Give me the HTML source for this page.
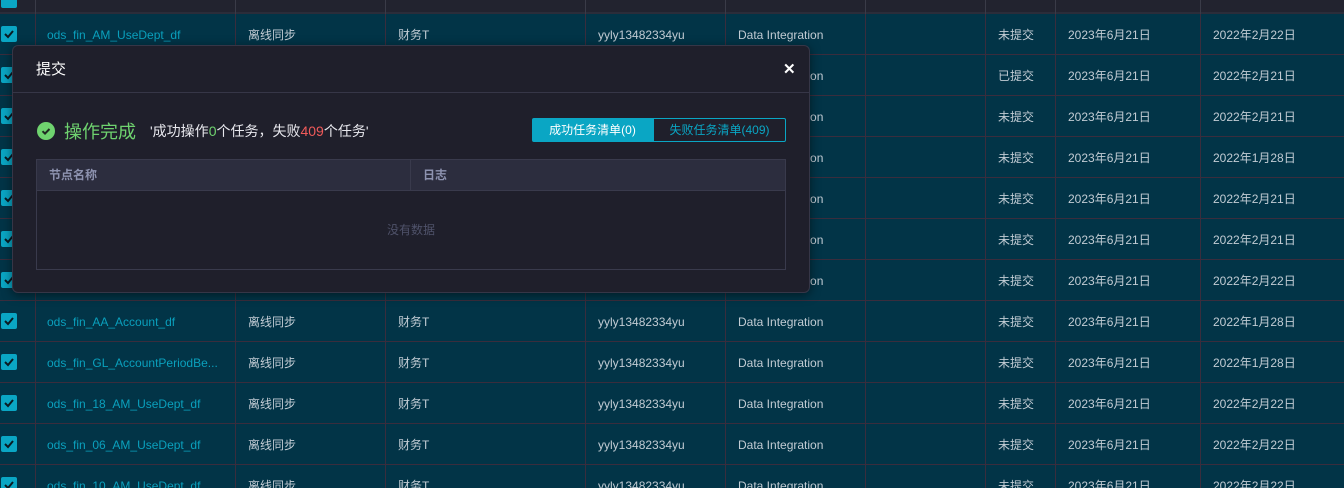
<!DOCTYPE html>
<html><head><meta charset="utf-8">
<style>
*{margin:0;padding:0;box-sizing:border-box}
html,body{width:1344px;height:488px;overflow:hidden}
body{background:#023447;font-family:"Liberation Sans","Noto Sans CJK SC",sans-serif;font-size:12px;color:#c2ccd4;position:relative}
.hdr{position:absolute;left:0;top:0;width:1344px;height:14px;background:#22232f;border-bottom:2px solid #2b2d3a}
.row{position:absolute;left:0;width:1344px;height:41px;border-bottom:1px solid #3a2d3d}
.c{position:absolute;top:0;height:41px;line-height:43px;border-left:1px solid #3a2d3d;padding-left:12px;white-space:nowrap;overflow:hidden}
.cb{position:absolute;left:1px;top:12px;width:16px;height:16px;background:#0aa6c4;border-radius:2px}
.cb svg{position:absolute;left:2px;top:2px}
.nm{color:#0aa0bd;padding-left:11px}
.modal{position:absolute;left:12px;top:45px;width:798px;height:248px;background:#1f1f2b;border:1px solid #363647;border-radius:6px;box-shadow:0 2px 10px rgba(0,0,0,.5)}
.mh{height:47px;border-bottom:1px solid #363647;color:#fff;font-size:15px;line-height:48px;padding-left:23px}
.x{position:absolute;left:770px;top:14px;color:#fff;font-size:15px;font-weight:bold}
.ok{position:absolute;left:24px;top:73px;height:24px;display:flex;align-items:center}
.ok .ic{width:18px;height:18px;border-radius:50%;background:#6fd36f;position:relative}
.ok .t{color:#6fd36f;font-size:18px;margin-left:9px}
.ok .m{color:#e8e8ee;font-size:14px;margin-left:14px}
.tabs{position:absolute;left:519px;top:72px;display:flex;height:24px;font-size:12px}
.tabs div{height:24px;line-height:22px;text-align:center;border:1px solid #0aa6c4}
.t1{width:121px;background:#0aa6c4;color:#fff;border-radius:2px 0 0 2px}
.t2{width:133px;color:#0aa6c4;border-radius:0 2px 2px 0}
.tb{position:absolute;left:23px;top:113px;width:750px;height:111px;border:1px solid #393a4c}
.th{height:31px;background:#2c2d3e;border-bottom:1px solid #393a4c;color:#8e93b0;font-weight:bold;line-height:30px;position:relative}
.th span{position:absolute;top:0}
.empty{text-align:center;color:#4f526a;line-height:78px}
</style></head><body>
<div class="hdr"></div>
<div class="cb" style="top:-8px"></div>
<div class="row" style="top:14px"><div class="cb"><svg width="12" height="12"><path d="M2 6l3 3 5-6" stroke="#0a1a22" stroke-width="2" fill="none"/></svg></div><div class="c nm" style="left:35px;width:200px">ods_fin_AM_UseDept_df</div><div class="c" style="left:235px;width:150px">离线同步</div><div class="c" style="left:385px;width:200px">财务T</div><div class="c" style="left:585px;width:140px">yyly13482334yu</div><div class="c" style="left:725px;width:140px">Data Integration</div><div class="c" style="left:865px;width:120px"></div><div class="c" style="left:985px;width:70px">未提交</div><div class="c" style="left:1055px;width:145px">2023年6月21日</div><div class="c" style="left:1200px;width:144px">2022年2月22日</div></div>
<div class="row" style="top:55px"><div class="cb"><svg width="12" height="12"><path d="M2 6l3 3 5-6" stroke="#0a1a22" stroke-width="2" fill="none"/></svg></div><div class="c" style="left:35px;width:200px"></div><div class="c" style="left:725px;width:140px">Data Integration</div><div class="c" style="left:865px;width:120px"></div><div class="c" style="left:985px;width:70px">已提交</div><div class="c" style="left:1055px;width:145px">2023年6月21日</div><div class="c" style="left:1200px;width:144px">2022年2月21日</div></div>
<div class="row" style="top:96px"><div class="cb"><svg width="12" height="12"><path d="M2 6l3 3 5-6" stroke="#0a1a22" stroke-width="2" fill="none"/></svg></div><div class="c" style="left:725px;width:140px">Data Integration</div><div class="c" style="left:865px;width:120px"></div><div class="c" style="left:985px;width:70px">未提交</div><div class="c" style="left:1055px;width:145px">2023年6月21日</div><div class="c" style="left:1200px;width:144px">2022年2月21日</div></div>
<div class="row" style="top:137px"><div class="cb"><svg width="12" height="12"><path d="M2 6l3 3 5-6" stroke="#0a1a22" stroke-width="2" fill="none"/></svg></div><div class="c" style="left:725px;width:140px">Data Integration</div><div class="c" style="left:865px;width:120px"></div><div class="c" style="left:985px;width:70px">未提交</div><div class="c" style="left:1055px;width:145px">2023年6月21日</div><div class="c" style="left:1200px;width:144px">2022年1月28日</div></div>
<div class="row" style="top:178px"><div class="cb"><svg width="12" height="12"><path d="M2 6l3 3 5-6" stroke="#0a1a22" stroke-width="2" fill="none"/></svg></div><div class="c" style="left:725px;width:140px">Data Integration</div><div class="c" style="left:865px;width:120px"></div><div class="c" style="left:985px;width:70px">未提交</div><div class="c" style="left:1055px;width:145px">2023年6月21日</div><div class="c" style="left:1200px;width:144px">2022年2月21日</div></div>
<div class="row" style="top:219px"><div class="cb"><svg width="12" height="12"><path d="M2 6l3 3 5-6" stroke="#0a1a22" stroke-width="2" fill="none"/></svg></div><div class="c" style="left:725px;width:140px">Data Integration</div><div class="c" style="left:865px;width:120px"></div><div class="c" style="left:985px;width:70px">未提交</div><div class="c" style="left:1055px;width:145px">2023年6月21日</div><div class="c" style="left:1200px;width:144px">2022年2月21日</div></div>
<div class="row" style="top:260px"><div class="cb"><svg width="12" height="12"><path d="M2 6l3 3 5-6" stroke="#0a1a22" stroke-width="2" fill="none"/></svg></div><div class="c" style="left:35px;width:200px"></div><div class="c" style="left:235px;width:150px"></div><div class="c" style="left:385px;width:200px"></div><div class="c" style="left:585px;width:140px"></div><div class="c" style="left:725px;width:140px">Data Integration</div><div class="c" style="left:865px;width:120px"></div><div class="c" style="left:985px;width:70px">未提交</div><div class="c" style="left:1055px;width:145px">2023年6月21日</div><div class="c" style="left:1200px;width:144px">2022年2月22日</div></div>
<div class="row" style="top:301px"><div class="cb"><svg width="12" height="12"><path d="M2 6l3 3 5-6" stroke="#0a1a22" stroke-width="2" fill="none"/></svg></div><div class="c nm" style="left:35px;width:200px">ods_fin_AA_Account_df</div><div class="c" style="left:235px;width:150px">离线同步</div><div class="c" style="left:385px;width:200px">财务T</div><div class="c" style="left:585px;width:140px">yyly13482334yu</div><div class="c" style="left:725px;width:140px">Data Integration</div><div class="c" style="left:865px;width:120px"></div><div class="c" style="left:985px;width:70px">未提交</div><div class="c" style="left:1055px;width:145px">2023年6月21日</div><div class="c" style="left:1200px;width:144px">2022年1月28日</div></div>
<div class="row" style="top:342px"><div class="cb"><svg width="12" height="12"><path d="M2 6l3 3 5-6" stroke="#0a1a22" stroke-width="2" fill="none"/></svg></div><div class="c nm" style="left:35px;width:200px">ods_fin_GL_AccountPeriodBe...</div><div class="c" style="left:235px;width:150px">离线同步</div><div class="c" style="left:385px;width:200px">财务T</div><div class="c" style="left:585px;width:140px">yyly13482334yu</div><div class="c" style="left:725px;width:140px">Data Integration</div><div class="c" style="left:865px;width:120px"></div><div class="c" style="left:985px;width:70px">未提交</div><div class="c" style="left:1055px;width:145px">2023年6月21日</div><div class="c" style="left:1200px;width:144px">2022年1月28日</div></div>
<div class="row" style="top:383px"><div class="cb"><svg width="12" height="12"><path d="M2 6l3 3 5-6" stroke="#0a1a22" stroke-width="2" fill="none"/></svg></div><div class="c nm" style="left:35px;width:200px">ods_fin_18_AM_UseDept_df</div><div class="c" style="left:235px;width:150px">离线同步</div><div class="c" style="left:385px;width:200px">财务T</div><div class="c" style="left:585px;width:140px">yyly13482334yu</div><div class="c" style="left:725px;width:140px">Data Integration</div><div class="c" style="left:865px;width:120px"></div><div class="c" style="left:985px;width:70px">未提交</div><div class="c" style="left:1055px;width:145px">2023年6月21日</div><div class="c" style="left:1200px;width:144px">2022年2月22日</div></div>
<div class="row" style="top:424px"><div class="cb"><svg width="12" height="12"><path d="M2 6l3 3 5-6" stroke="#0a1a22" stroke-width="2" fill="none"/></svg></div><div class="c nm" style="left:35px;width:200px">ods_fin_06_AM_UseDept_df</div><div class="c" style="left:235px;width:150px">离线同步</div><div class="c" style="left:385px;width:200px">财务T</div><div class="c" style="left:585px;width:140px">yyly13482334yu</div><div class="c" style="left:725px;width:140px">Data Integration</div><div class="c" style="left:865px;width:120px"></div><div class="c" style="left:985px;width:70px">未提交</div><div class="c" style="left:1055px;width:145px">2023年6月21日</div><div class="c" style="left:1200px;width:144px">2022年2月22日</div></div>
<div class="row" style="top:465px"><div class="cb"><svg width="12" height="12"><path d="M2 6l3 3 5-6" stroke="#0a1a22" stroke-width="2" fill="none"/></svg></div><div class="c nm" style="left:35px;width:200px">ods_fin_10_AM_UseDept_df</div><div class="c" style="left:235px;width:150px">离线同步</div><div class="c" style="left:385px;width:200px">财务T</div><div class="c" style="left:585px;width:140px">yyly13482334yu</div><div class="c" style="left:725px;width:140px">Data Integration</div><div class="c" style="left:865px;width:120px"></div><div class="c" style="left:985px;width:70px">未提交</div><div class="c" style="left:1055px;width:145px">2023年6月21日</div><div class="c" style="left:1200px;width:144px">2022年2月22日</div></div>
<div style="position:absolute;top:0;height:14px;left:35px;border-left:1px solid #3a3b48"></div>
<div style="position:absolute;top:0;height:14px;left:235px;border-left:1px solid #3a3b48"></div>
<div style="position:absolute;top:0;height:14px;left:385px;border-left:1px solid #3a3b48"></div>
<div style="position:absolute;top:0;height:14px;left:585px;border-left:1px solid #3a3b48"></div>
<div style="position:absolute;top:0;height:14px;left:725px;border-left:1px solid #3a3b48"></div>
<div style="position:absolute;top:0;height:14px;left:865px;border-left:1px solid #3a3b48"></div>
<div style="position:absolute;top:0;height:14px;left:985px;border-left:1px solid #3a3b48"></div>
<div style="position:absolute;top:0;height:14px;left:1055px;border-left:1px solid #3a3b48"></div>
<div style="position:absolute;top:0;height:14px;left:1200px;border-left:1px solid #3a3b48"></div>

<div class="modal">
  <div class="mh">提交</div>
  <div class="x">✕</div>
  <div class="ok">
    <div class="ic"><svg width="18" height="18" style="position:absolute;left:0;top:0"><path d="M5.5 9.2l2.5 2.4 4.5-4.6" stroke="#1f2a22" stroke-width="2" fill="none"/></svg></div>
    <span class="t">操作完成</span>
    <span class="m">'成功操作<span style="color:#6fd36f">0</span>个任务，失败<span style="color:#f05a5a">409</span>个任务'</span>
  </div>
  <div class="tabs"><div class="t1">成功任务清单(0)</div><div class="t2">失败任务清单(409)</div></div>
  <div class="tb">
    <div class="th"><span style="left:12px">节点名称</span><span style="left:373px;height:30px;border-left:1px solid #393a4c;padding-left:12px">日志</span></div>
    <div class="empty">没有数据</div>
  </div>
</div>
</body></html>
